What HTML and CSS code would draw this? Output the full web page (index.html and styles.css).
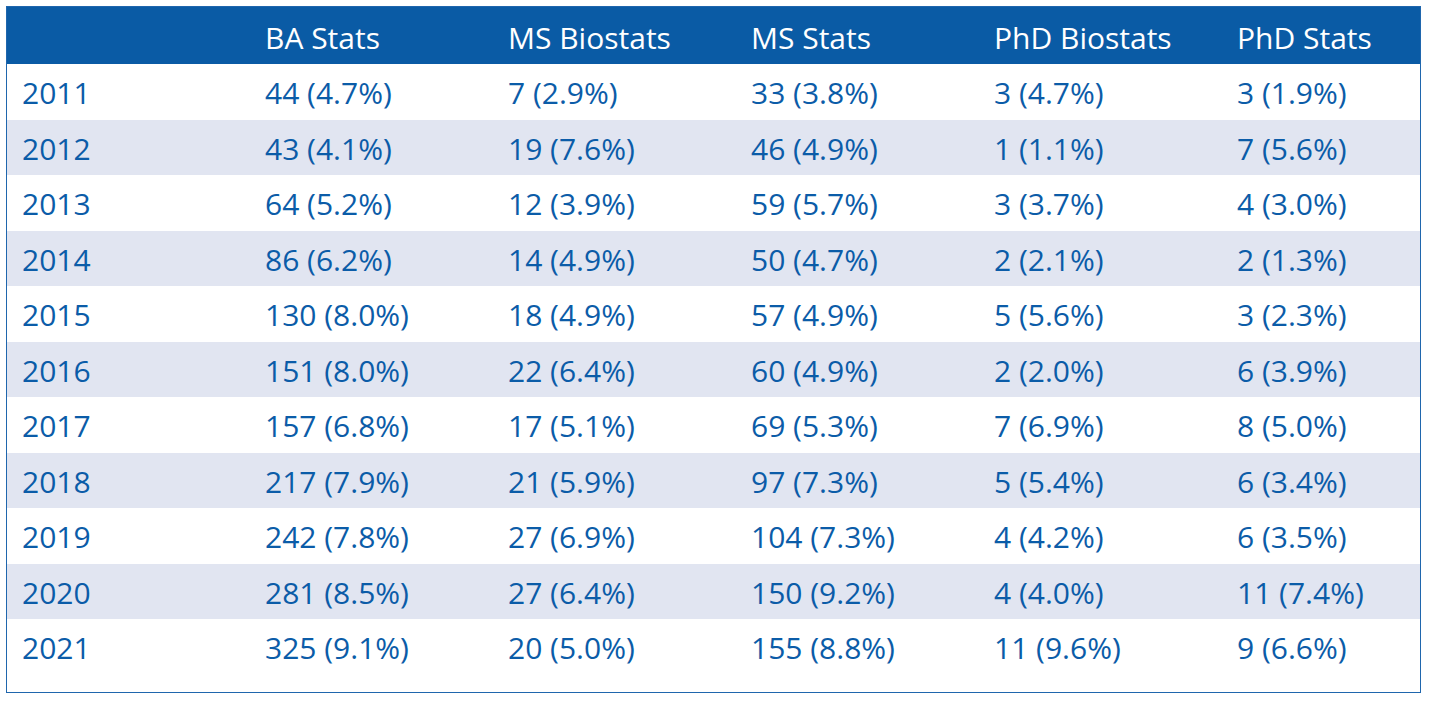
FILE: index.html
```html
<!DOCTYPE html>
<html>
<head>
<meta charset="utf-8">
<link rel="stylesheet" href="styles.css">
</head>
<body>
<div class="frame">
<table class="stats">
<colgroup><col class="c"><col class="c"><col class="c"><col class="c"><col class="c"><col class="last"></colgroup>
<thead>
<tr><th></th><th>BA Stats</th><th>MS Biostats</th><th>MS Stats</th><th>PhD Biostats</th><th>PhD Stats</th></tr>
</thead>
<tbody>
<tr><td>2011</td><td>44 (4.7%)</td><td>7 (2.9%)</td><td>33 (3.8%)</td><td>3 (4.7%)</td><td>3 (1.9%)</td></tr>
<tr><td>2012</td><td>43 (4.1%)</td><td>19 (7.6%)</td><td>46 (4.9%)</td><td>1 (1.1%)</td><td>7 (5.6%)</td></tr>
<tr><td>2013</td><td>64 (5.2%)</td><td>12 (3.9%)</td><td>59 (5.7%)</td><td>3 (3.7%)</td><td>4 (3.0%)</td></tr>
<tr><td>2014</td><td>86 (6.2%)</td><td>14 (4.9%)</td><td>50 (4.7%)</td><td>2 (2.1%)</td><td>2 (1.3%)</td></tr>
<tr><td>2015</td><td>130 (8.0%)</td><td>18 (4.9%)</td><td>57 (4.9%)</td><td>5 (5.6%)</td><td>3 (2.3%)</td></tr>
<tr><td>2016</td><td>151 (8.0%)</td><td>22 (6.4%)</td><td>60 (4.9%)</td><td>2 (2.0%)</td><td>6 (3.9%)</td></tr>
<tr><td>2017</td><td>157 (6.8%)</td><td>17 (5.1%)</td><td>69 (5.3%)</td><td>7 (6.9%)</td><td>8 (5.0%)</td></tr>
<tr><td>2018</td><td>217 (7.9%)</td><td>21 (5.9%)</td><td>97 (7.3%)</td><td>5 (5.4%)</td><td>6 (3.4%)</td></tr>
<tr><td>2019</td><td>242 (7.8%)</td><td>27 (6.9%)</td><td>104 (7.3%)</td><td>4 (4.2%)</td><td>6 (3.5%)</td></tr>
<tr><td>2020</td><td>281 (8.5%)</td><td>27 (6.4%)</td><td>150 (9.2%)</td><td>4 (4.0%)</td><td>11 (7.4%)</td></tr>
<tr><td>2021</td><td>325 (9.1%)</td><td>20 (5.0%)</td><td>155 (8.8%)</td><td>11 (9.6%)</td><td>9 (6.6%)</td></tr>
</tbody>
</table>
</div>
</body>
</html>
```
FILE: styles.css
```css
html, body {
  margin: 0;
  padding: 0;
  background: #ffffff;
}

.frame {
  margin: 6px 0 0 6px;
  width: 1413px;
  border: 1px solid #1f66ad;
  padding-bottom: 17px;
}

.stats {
  border-collapse: collapse;
  table-layout: fixed;
  width: 1413px;
  font-family: "Open Sans", "Noto Sans", sans-serif;
  font-size: 30px;
  color: #0b5ca8;
}

.stats .c { width: 243px; }
.stats .last { width: 198px; }

.stats th,
.stats td {
  padding: 0 0 0 15px;
  text-align: left;
  white-space: nowrap;
  font-weight: 400;
}

.stats thead th {
  background: #0a5ba5;
  color: #ffffff;
  height: 57px;
  padding-top: 4px;
  box-sizing: border-box;
}

.stats tbody td {
  height: 55.5px;
  padding-top: 2px;
  box-sizing: border-box;
}

.stats tbody tr:nth-child(even) td {
  background: #e1e5f1;
}
```
